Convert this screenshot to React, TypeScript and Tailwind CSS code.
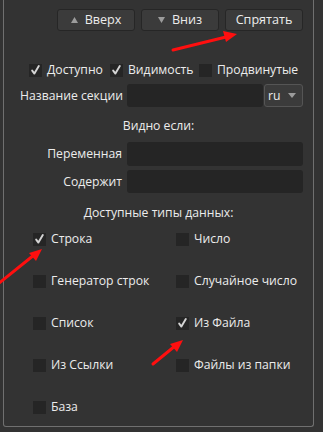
import React from "react";

function Check({ checked }: { checked?: boolean }) {
  return (
    <span className="flex h-[13px] w-[13px] shrink-0 items-center justify-center bg-[#252525]">
      {checked && (
        <svg width="9" height="10" viewBox="0 0 9 10">
          <path d="M1.2 5.6 L3.4 8.6 L7.8 1" fill="none" stroke="#d4d4d4" strokeWidth="1.9" strokeLinecap="round" strokeLinejoin="round" />
        </svg>
      )}
    </span>
  );
}

function Btn({ children }: { children: React.ReactNode }) {
  return (
    <div className="flex h-[22px] w-[78px] items-center justify-center gap-[7px] rounded-[3px] border border-[#262626] bg-[#3b3b3b] text-[12.6px] text-[#ececec]">
      {children}
    </div>
  );
}

function Item({ label, checked, className }: { label: string; checked?: boolean; className?: string }) {
  return (
    <div className={"flex h-[20px] items-center gap-[5px] whitespace-nowrap " + (className ?? "")}>
      <Check checked={checked} />
      <span>{label}</span>
    </div>
  );
}

export default function App() {
  return (
    <div
      className="relative h-[432px] w-[323px] overflow-hidden bg-[#333333] text-[12.2px] leading-[18px] text-[#ececec]"
      style={{ fontFamily: '"Open Sans", "Noto Sans", sans-serif' }}
    >
      <div className="ml-[3px] flex h-[427px] w-[311px] flex-col rounded-b-[3px] border-x border-b border-[#707070]">
        <div className="mt-[9px] flex justify-end gap-[6px] pr-[10px]">
          <Btn>
            <svg width="7" height="6" viewBox="0 0 7 6"><path d="M3.5 0 L7 6 L0 6 Z" fill="#9c9c9c" /></svg>
            <span>Вверх</span>
          </Btn>
          <Btn>
            <svg width="7" height="6" viewBox="0 0 7 6"><path d="M0 0 L7 0 L3.5 6 Z" fill="#9c9c9c" /></svg>
            <span>Вниз</span>
          </Btn>
          <Btn>
            <span>Спрятать</span>
          </Btn>
        </div>

        <div className="mt-[29px] flex h-[20px] items-center pl-[25px]">
          <Item label="Доступно" checked className="w-[81px]" />
          <Item label="Видимость" checked className="w-[89px]" />
          <Item label="Продвинутые" />
        </div>

        <div className="mt-[4px] flex h-[23px] items-center pl-[15px] pr-[10px]">
          <span className="w-[104px] whitespace-nowrap text-right">Название секции</span>
          <div className="ml-[4px] h-[23px] flex-1 rounded-[3px] bg-[#252525]" />
          <div className="ml-[1px] flex h-[23px] w-[39px] items-center justify-between rounded-[3px] border border-[#555555] bg-[#3b3b3b] pl-[3px] pr-[6px]">
            <span>ru</span>
            <svg width="8" height="5" viewBox="0 0 8 5"><path d="M0 0 L8 0 L4 5 Z" fill="#9c9c9c" /></svg>
          </div>
        </div>

        <div className="mt-[10px] text-center">Видно если:</div>

        <div className="mt-[7px] flex h-[24px] items-center pl-[19px] pr-[10px]">
          <span className="w-[99px] whitespace-nowrap text-right">Переменная</span>
          <div className="ml-[5px] h-[24px] flex-1 rounded-[3px] bg-[#252525]" />
        </div>
        <div className="mt-[4px] flex h-[23px] items-center pl-[19px] pr-[10px]">
          <span className="w-[99px] whitespace-nowrap text-right">Содержит</span>
          <div className="ml-[5px] h-[23px] flex-1 rounded-[3px] bg-[#252525]" />
        </div>

        <div className="mt-[11px] text-center">Доступные типы данных:</div>

        <div className="mt-[7px] grid grid-cols-[143px_1fr] gap-y-[22px] pl-[29px]">
          <Item label="Строка" checked />
          <Item label="Число" />
          <Item label="Генератор строк" />
          <Item label="Случайное число" />
          <Item label="Список" />
          <Item label="Из Файла" checked />
          <Item label="Из Ссылки" />
          <Item label="Файлы из папки" />
          <Item label="База" />
        </div>
      </div>

      <svg className="pointer-events-none absolute left-0 top-0" width="323" height="432" viewBox="0 0 323 432">
        <g stroke="#ff0f0f" strokeWidth="3" strokeLinecap="round" fill="#ff0f0f">
          <line x1="173" y1="50" x2="226" y2="37" />
          <path d="M237 34 L223 31 L226 42 Z" stroke="none" />
          <line x1="-2" y1="284" x2="34" y2="255" />
          <path d="M42 249 L29 253 L36 261 Z" stroke="none" />
          <line x1="153" y1="364" x2="175" y2="346" />
          <path d="M183 340 L170 344 L177 352 Z" stroke="none" />
        </g>
      </svg>
    </div>
  );
}
